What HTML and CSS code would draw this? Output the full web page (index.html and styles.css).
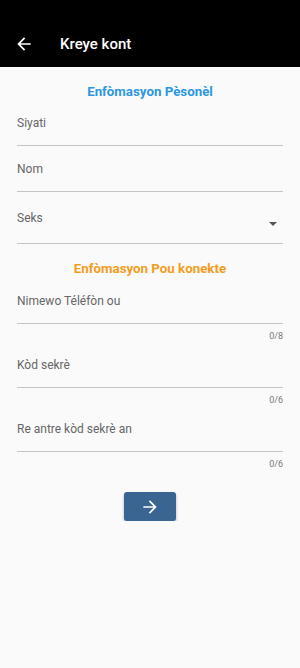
FILE: index.html
```html
<!DOCTYPE html>
<html>
<head>
    <title>Kreye kont</title>
    <link rel="stylesheet" href="styles.css">
</head>
<body>
    <div class="app-bar">
        <svg class="back" width="20" height="20" viewBox="0 0 24 24"><path d="M20 11H7.83l5.59-5.59L12 4l-8 8 8 8 1.41-1.41L7.83 13H20v-2z" fill="#fff"/></svg>
        <span class="title">Kreye kont</span>
    </div>
    <div class="form">
        <h2 class="section blue">Enfòmasyon Pèsonèl</h2>
        <div class="field"><span class="label">Siyati</span></div>
        <div class="field"><span class="label">Nom</span></div>
        <div class="field select">
            <span class="label">Seks</span>
            <span class="caret"></span>
        </div>
        <h2 class="section orange">Enfòmasyon Pou konekte</h2>
        <div class="field"><span class="label">Nimewo Téléfòn ou</span></div>
        <div class="counter">0/8</div>
        <div class="field"><span class="label">Kòd sekrè</span></div>
        <div class="counter">0/6</div>
        <div class="field"><span class="label">Re antre kòd sekrè an</span></div>
        <div class="counter">0/6</div>
        <div class="actions">
            <button class="next">
                <svg width="20" height="20" viewBox="0 0 24 24"><path d="M12 4l-1.41 1.41L16.17 11H4v2h12.17l-5.58 5.59L12 20l8-8z" fill="#fff"/></svg>
            </button>
        </div>
    </div>
</body>
</html>
```

FILE: styles.css
```css
body {
    margin: 0;
    padding: 0;
    background-color: #fafafa;
    font-family: Roboto, "Noto Sans", sans-serif;
}

.app-bar {
    height: 67px;
    background-color: #000;
    display: flex;
    align-items: center;
    padding: 0 0 13px 14px;
    box-sizing: border-box;
    align-content: flex-end;
    flex-wrap: wrap;
    color: #fff;
}

.title {
    margin-left: 26px;
    font-size: 15px;
    font-weight: 500;
    line-height: 20px;
}

.form {
    padding: 0 17px;
}

.section {
    margin: 0;
    text-align: center;
    font-size: 13.3px;
    font-weight: bold;
}

.blue {
    color: #2c97de;
    padding-top: 17px;
    line-height: 16px;
}

.orange {
    color: #f39c1e;
    padding-top: 16px;
    line-height: 18px;
}

.field {
    position: relative;
    border-bottom: 1px solid #c4c4c4;
    height: 30px;
    padding-top: 15px;
}

.label {
    font-size: 12px;
    color: #666;
    line-height: 16px;
    display: block;
}

.select {
    height: 33px;
    padding-top: 18px;
}

.caret {
    position: absolute;
    right: 6px;
    top: 30px;
    width: 0;
    height: 0;
    border-left: 4px solid transparent;
    border-right: 4px solid transparent;
    border-top: 4px solid #555;
}

.counter {
    text-align: right;
    font-size: 9px;
    color: #777;
    line-height: 12px;
    padding-top: 6px;
}

.actions {
    display: flex;
    justify-content: center;
    padding-top: 22px;
}

.next {
    width: 52px;
    height: 29px;
    border: none;
    border-radius: 3px;
    background-color: #3a6592;
    box-shadow: 0 2px 3px rgba(0, 0, 0, 0.3);
    display: flex;
    align-items: center;
    justify-content: center;
    padding: 0;
}
```
